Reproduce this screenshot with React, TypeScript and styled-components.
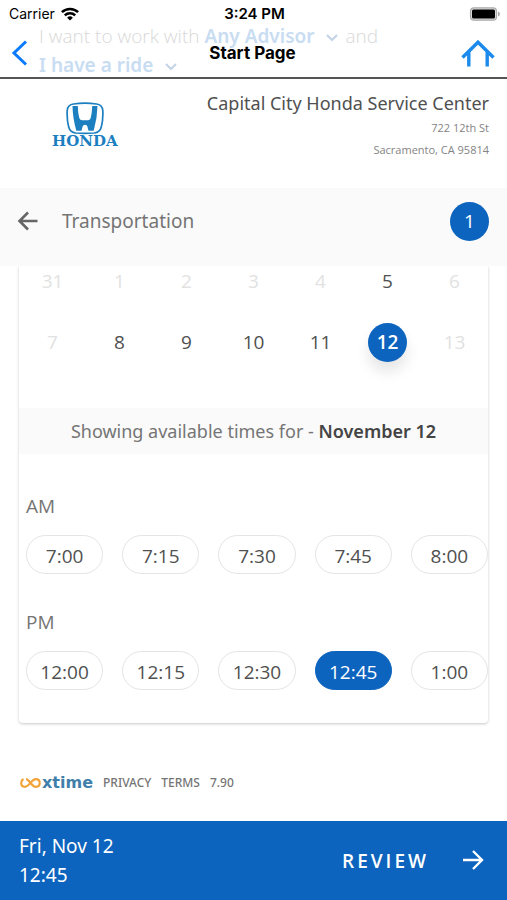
import React, { useState } from "react";
import styled, { createGlobalStyle, css } from "styled-components";

const BLUE = "#0d64be";
const WIDE_SANS = `"Noto Sans", "Open Sans", sans-serif`;

const GlobalStyle = createGlobalStyle`
  *, *::before, *::after { box-sizing: border-box; }
  body {
    margin: 0;
    background: #fff;
    color: #505050;
    font-family: "Open Sans", "Noto Sans", sans-serif;
    font-size: 19px;
    line-height: 24px;
  }
  button { font: inherit; color: inherit; border: 0; padding: 0; background: none; cursor: pointer; }
  a { color: inherit; text-decoration: none; }
  svg { display: block; flex: none; }
`;

const Page = styled.div`
  min-height: 100vh;
  display: flex;
  flex-direction: column;
`;

const TopBar = styled.header`
  position: relative;
  height: 79px;
  border-bottom: 2px solid #555;
  overflow: hidden;
  font-family: Inter, "Liberation Sans", sans-serif;
  color: #000;
`;

const StatusBar = styled.div`
  position: relative;
  display: grid;
  grid-template-columns: 1fr auto 1fr;
  align-items: center;
  height: 27px;
  padding: 0 7px 0 9px;
  font-size: 14px;
  line-height: 26px;
`;

const Carrier = styled.div`
  display: flex;
  align-items: center;
  gap: 6px;
`;

const Clock = styled.div`
  font-size: 15px;
  font-weight: 600;
`;

const BatteryIcon = styled.svg`
  justify-self: end;
`;

const NavBar = styled.nav`
  position: relative;
  display: grid;
  grid-template-columns: 1fr auto 1fr;
  align-items: center;
  height: 52px;
  padding: 0 12px 0 10px;
`;

const NavTitle = styled.h1`
  margin: 0;
  font-size: 17px;
  font-weight: 700;
`;

const NavButton = styled.button<{ $end?: boolean }>`
  justify-self: ${(p) => (p.$end ? "end" : "start")};
`;

/* Page content scrolled beneath the translucent navigation bar */
const ScrolledText = styled.div`
  position: absolute;
  left: 39px;
  top: 22px;
  right: 0;
  color: #d8d8d8;
  font-family: "Open Sans", "Noto Sans", sans-serif;
  font-size: 19px;
  font-weight: 300;
  line-height: 29px;
`;

const ScrolledLine = styled.div`
  display: flex;
  align-items: center;
  gap: 5px;
  white-space: nowrap;

  b { font-family: ${WIDE_SANS}; font-weight: 600; color: #c8dcf2; }
  svg { margin: 2px 1px 0 6px; }
`;

const Dealer = styled.section`
  display: flex;
  justify-content: space-between;
  height: 109px;
  padding: 12px 18px 0 52px;
`;

const Logo = styled.div`
  display: flex;
  flex-direction: column;
  align-items: center;
  padding-top: 11px;
  color: #1c7fc0;
`;

const LogoName = styled.span`
  font: bold 15px/13px "DejaVu Serif", serif;
`;

const DealerInfo = styled.address`
  text-align: right;
  font-style: normal;
  font-size: 11px;
  line-height: 22px;
  color: #848484;
`;

const DealerName = styled.h2`
  margin: 0 0 2px;
  font-family: ${WIDE_SANS};
  font-size: 18px;
  font-weight: 400;
  line-height: 24px;
  color: #505050;
`;

const TitleBar = styled.section`
  display: flex;
  align-items: center;
  height: 78px;
  padding: 0 18px 12px 16px;
  background: #fafafa;
  color: #757575;
`;

const Title = styled.h2`
  flex: 1;
  margin: 0 0 0 22px;
  font-family: ${WIDE_SANS};
  font-size: 19px;
  font-weight: 400;
`;

const CountBadge = styled.span`
  width: 39px;
  border-radius: 50%;
  background: ${BLUE};
  color: #fff;
  line-height: 39px;
  text-align: center;
`;

const Card = styled.main`
  margin: 0 19px;
  padding-bottom: 33px;
  border-radius: 0 0 4px 4px;
  box-shadow: 0 1px 3px rgba(0, 0, 0, 0.22);
  clip-path: inset(0 -6px -6px -6px);
`;

const Calendar = styled.div`
  display: grid;
  grid-template-columns: repeat(7, 1fr);
  grid-template-rows: 30px 40px;
  row-gap: 26px;
  place-items: center;
  padding-bottom: 46px;
`;

const Day = styled.button<{ $selected: boolean }>`
  width: 39px;
  height: 39px;
  border-radius: 50%;

  &:disabled { color: #e2e2e2; cursor: default; }

  ${(p) =>
    p.$selected &&
    css`
      background: ${BLUE};
      color: #fff;
      font-weight: 600;
      box-shadow: 0 10px 14px rgba(0, 0, 0, 0.1);
    `}
`;

const Showing = styled.p`
  margin: 0 0 40px;
  background: #fafafa;
  color: #757575;
  font-family: ${WIDE_SANS};
  font-size: 18px;
  line-height: 46px;
  text-align: center;

  strong { font-weight: 600; color: #444; }
`;

const Period = styled.section`
  padding-left: 7px;

  & + & { margin-top: 36px; }
`;

const PeriodName = styled.h3`
  margin: 0 0 17px;
  font-size: 19px;
  font-weight: 400;
  color: #757575;
`;

const Slots = styled.div`
  display: grid;
  grid-template-columns: repeat(5, 1fr);
  column-gap: 19px;
`;

const Slot = styled.button<{ $selected: boolean }>`
  height: 39px;
  padding-top: 2px;
  border: 1px solid ${(p) => (p.$selected ? BLUE : "#e4e4e4")};
  border-radius: 20px;
  background: ${(p) => (p.$selected ? BLUE : "#fff")};
  color: ${(p) => (p.$selected ? "#fff" : "#505050")};
`;

const Legal = styled.footer`
  display: flex;
  align-items: center;
  gap: 10px;
  margin-top: auto;
  padding: 0 20px 26px;
  font-family: ${WIDE_SANS};
  font-size: 12px;
  font-weight: 500;
  color: #757575;
`;

const XtimeBrand = styled.span`
  display: flex;
  align-items: center;
  gap: 1px;
  color: #417fab;
  font: bold 16px/22px "DejaVu Sans", sans-serif;
`;

const BottomBar = styled.section`
  display: flex;
  align-items: center;
  justify-content: space-between;
  height: 79px;
  padding: 0 22px 0 19px;
  background: ${BLUE};
  color: #fff;
`;

const Summary = styled.div`
  font-family: ${WIDE_SANS};
  line-height: 29px;
  padding-top: 1px;
`;

const ReviewButton = styled.button`
  display: flex;
  align-items: center;
  gap: 32px;
  font-weight: 600;
  letter-spacing: 3px;
`;

const Chevron = () => (
  <svg width="14" height="10" viewBox="0 0 14 10" fill="none" stroke="#c3d3e6" strokeWidth="2">
    <path d="M2 2l5 5 5-5" />
  </svg>
);

const days = [
  { n: 31 }, { n: 1 }, { n: 2 }, { n: 3 }, { n: 4 }, { n: 5, open: true }, { n: 6 },
  { n: 7 }, { n: 8, open: true }, { n: 9, open: true }, { n: 10, open: true },
  { n: 11, open: true }, { n: 12, open: true }, { n: 13 },
];

const periods = [
  { name: "AM", times: ["7:00", "7:15", "7:30", "7:45", "8:00"] },
  { name: "PM", times: ["12:00", "12:15", "12:30", "12:45", "1:00"] },
];

export default function App() {
  const [day, setDay] = useState(12);
  const [time, setTime] = useState("12:45");
  const weekday = ["Sun", "Mon", "Tue", "Wed", "Thu", "Fri", "Sat"][day % 7];

  return (
    <Page>
      <GlobalStyle />
      <TopBar>
        <ScrolledText>
          <ScrolledLine>
            I want to work with <b>Any Advisor</b> <Chevron /> and
          </ScrolledLine>
          <ScrolledLine>
            <b>I have a ride</b> <Chevron />
          </ScrolledLine>
        </ScrolledText>
        <StatusBar>
          <Carrier>
            Carrier
            <svg width="18" height="14" viewBox="0 0 18 14" fill="none" stroke="#000" strokeWidth="2.5">
              <path d="M0.9 5.2a11.6 11.6 0 0 1 16.2 0M3.8 8.3a7.4 7.4 0 0 1 10.4 0" />
              <path d="M9 13.6L6.1 10.7a4.1 4.1 0 0 1 5.8 0z" fill="#000" stroke="none" />
            </svg>
          </Carrier>
          <Clock>3:24 PM</Clock>
          <BatteryIcon width="31" height="14" viewBox="0 0 31 14">
            <rect x="1.5" y="0.8" width="26" height="12.4" rx="3.5" fill="#ddd" stroke="#aaa" strokeWidth="1.2" />
            <rect x="3" y="2.5" width="23" height="9" rx="1.5" />
            <path d="M29 4.5q2 .6 2 2.5t-2 2.5z" fill="#aaa" />
          </BatteryIcon>
        </StatusBar>
        <NavBar>
          <NavButton aria-label="Back">
            <svg width="18" height="26" viewBox="0 0 18 26" fill="none" stroke="#0a7aff" strokeWidth="3">
              <path d="M16 1.5L4 13 16 24.500" />
            </svg>
          </NavButton>
          <NavTitle>Start Page</NavTitle>
          <NavButton $end aria-label="Home">
            <svg width="34" height="27" viewBox="0 0 34 27" fill="none" stroke="#1b8aec" strokeWidth="3.4">
              <path d="M1.500 17.500L17 2.200l15.500 15.300M7.800 12v14.500M26.200 12v14.500" />
            </svg>
          </NavButton>
        </NavBar>
      </TopBar>

      <Dealer>
        <Logo>
          <svg width="38" height="33" viewBox="0 0 38 33">
            <path
              d="M7.500 2Q19 .4 30.500 2q5.800.8 6.300 6.500Q37.300 17 35.300 25q-1.300 5.300-7 6Q19 31.900 9.700 31q-5.700-.7-7-6Q.7 17 1.200 8.500 1.700 2.800 7.500 2z"
              fill="none" stroke="currentColor" strokeWidth="1.700"
            />
            <path
              d="M6.500 4h5.300q.3 8 1.700 12.400.6 1.800 2.500 1.800h6q1.900 0 2.500-1.800Q25.900 12 26.200 4h5.300q-.2 12-3.800 24.700h-5.200l-1.200-4.500q-.4-1.500-2.300-1.500t-2.300 1.500l-1.200 4.500h-5.200Q6.700 16 6.500 4z"
              fill="currentColor"
            />
          </svg>
          <LogoName>HONDA</LogoName>
        </Logo>
        <DealerInfo>
          <DealerName>Capital City Honda Service Center</DealerName>
          722 12th St
          <br />
          Sacramento, CA 95814
        </DealerInfo>
      </Dealer>

      <TitleBar>
        <button aria-label="Back to previous step">
          <svg width="24" height="24" viewBox="0 0 24 24" fill="none" stroke="#666" strokeWidth="2.6">
            <path d="M21.500 12H4M12 3.500L3.500 12l8.500 8.500" />
          </svg>
        </button>
        <Title>Transportation</Title>
        <CountBadge>1</CountBadge>
      </TitleBar>

      <Card>
        <Calendar>
          {days.map((d) => (
            <Day
              key={d.n}
              disabled={!d.open}
              $selected={d.n === day}
              aria-pressed={d.n === day}
              onClick={() => setDay(d.n)}
            >
              {d.n}
            </Day>
          ))}
        </Calendar>
        <Showing>
          Showing available times for - <strong>November {day}</strong>
        </Showing>
        {periods.map((p) => (
          <Period key={p.name}>
            <PeriodName>{p.name}</PeriodName>
            <Slots>
              {p.times.map((t) => (
                <Slot key={t} $selected={t === time} aria-pressed={t === time} onClick={() => setTime(t)}>
                  {t}
                </Slot>
              ))}
            </Slots>
          </Period>
        ))}
      </Card>

      <Legal>
        <XtimeBrand>
          <svg width="21" height="12" viewBox="0 0 21 12" fill="none" stroke="#f2a33a" strokeWidth="2.200">
            <path d="M3.500 2Q1.200 3.300 1.200 6q0 3.800 3.800 3.800c4 0 6.500-7.600 10.800-7.600q3.900 0 3.900 3.800t-3.900 3.800C11.500 9.800 9.500 2.200 6 2.200" />
          </svg>
          xtime
        </XtimeBrand>
        <a href="#privacy">PRIVACY</a>
        <a href="#terms">TERMS</a>
        <span>7.90</span>
      </Legal>

      <BottomBar>
        <Summary>
          {weekday}, Nov {day}
          <br />
          {time}
        </Summary>
        <ReviewButton>
          REVIEW
          <svg width="24" height="24" viewBox="0 0 24 24" fill="none" stroke="#fff" strokeWidth="2.400">
            <path d="M2 11h18M12 2l9 9-9 9" />
          </svg>
        </ReviewButton>
      </BottomBar>
    </Page>
  );
}
